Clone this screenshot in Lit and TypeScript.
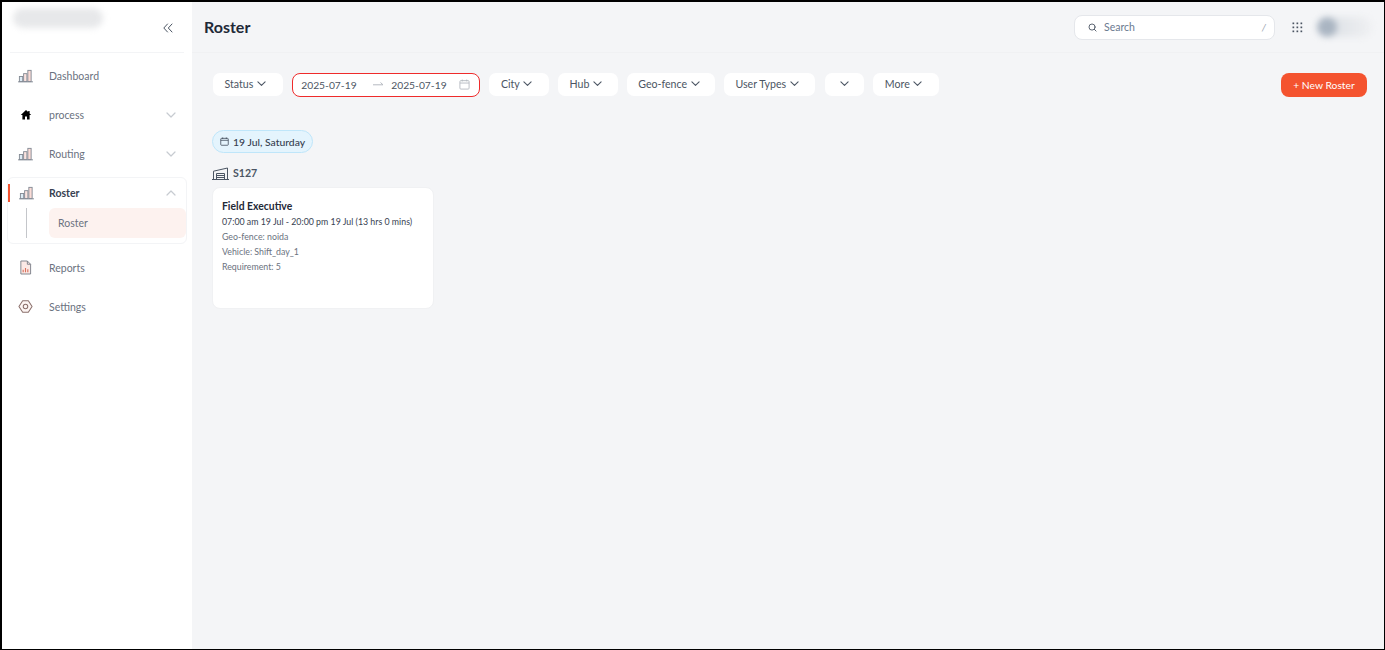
import { LitElement, html, css, svg } from "lit";
import { customElement } from "lit/decorators.js";

const chevron = (cls = "chev") => html`<svg class=${cls} viewBox="0 0 10 6" fill="none" stroke="currentColor" stroke-width="1.2" stroke-linecap="round" stroke-linejoin="round"><path d="M1 1l4 4 4-4"/></svg>`;

const bars = html`<svg class="ico" viewBox="0 0 16 14" fill="none" stroke="#858b95" stroke-width="1">
  <rect x="1.5" y="7.5" width="3.5" height="5.5" fill="#dcebf5"/>
  <rect x="6" y="4.5" width="3.5" height="8.5" fill="#fbe3df"/>
  <rect x="10.5" y="1" width="3.5" height="12" fill="#fbdcd6"/>
  <path d="M0 13.2h16"/></svg>`;

const home = html`<svg class="ico home" viewBox="0 0 12 12"><path fill="#000" d="M6 1 .8 6h1.6v4.6h2.6V7.6h2v3h2.6V6h1.6L9.6 4.4V2H8.2v1.1z"/></svg>`;

const report = html`<svg class="ico rep" viewBox="0 0 14 16" fill="none" stroke="#7b7f88" stroke-width="1">
  <path d="M2 1h7l3.5 3.5V15H2z" fill="#fbe9e5"/><path d="M9 1v3.5h3.5"/>
  <path d="M4.5 13V10.5M7 13V8.5M9.5 13V10" stroke="#d9705c" stroke-width="1.2"/></svg>`;

const gear = html`<svg class="ico gear" viewBox="0 0 16 16" fill="none" stroke="#8a6f6b" stroke-width="1.1">
  <path d="M5 1.8h6l1.4 2.2L15 8l-2.6 4-1.4 2.2H5L3.6 12 1 8l2.6-4z" stroke-linejoin="round" fill="#fdf5f3"/>
  <circle cx="8" cy="8" r="2.4"/></svg>`;

const calendar = (cls: string) => html`<svg class=${cls} viewBox="0 0 12 12" fill="none" stroke="currentColor" stroke-width="1"><rect x="1" y="1.8" width="10" height="9.2" rx="1"/><path d="M1 4.4h10M3.6.6v2M8.4.6v2"/></svg>`;

const warehouse = html`<svg class="wh" viewBox="0 0 17 13" fill="none" stroke="#4b5563" stroke-width="1">
  <path d="M0 12.5h17M1.5 12.5V4.2L15.5 1v11.5"/><path d="M4.5 12.5V6.5h8v6M4.5 8.5h8M4.5 10.5h8"/></svg>`;

interface NavItem { label: string; icon: unknown; arrow?: boolean }

@customElement("app-root")
export class AppRoot extends LitElement {
  static styles = css`
    :host {
      display: block;
      font-family: Lato, "Liberation Sans", sans-serif;
      color: #4b5563;
    }
    .frame {
      box-sizing: border-box;
      height: 650px;
      border: 2px solid #000;
      border-bottom-width: 1px;
      border-right-width: 1px;
      display: flex;
      background: #f4f5f7;
      overflow: hidden;
    }
    .side {
      width: 190px;
      flex: none;
      background: #fff;
      display: flex;
      flex-direction: column;
    }
    .brand {
      height: 51px;
      box-sizing: border-box;
      margin: 0 8px;
      border-bottom: 1px solid #f3f4f6;
      display: flex;
      align-items: center;
      justify-content: space-between;
      padding: 0 4px 0 3px;
    }
    .logo {
      width: 90px;
      height: 20px;
      margin-top: -19px;
      border-radius: 10px;
      background: #e7e8ea;
      filter: blur(3px);
    }
    .collapse {
      width: 24px;
      height: 24px;
      display: flex;
      align-items: center;
      justify-content: center;
      color: #4b5563;
      margin-top: 2px;
    }
    .collapse svg { width: 10px; height: 10px; }
    .nav { padding: 3px 5px 0 5px; display: flex; flex-direction: column; }
    .item {
      height: 39px;
      box-sizing: border-box;
      display: flex;
      align-items: center;
      font-size: 10.5px;
      color: #6b7280;
      position: relative;
    }
    .icon-box { width: 37px; flex: none; display: flex; justify-content: center; box-sizing: border-box; }
    .ico { width: 15px; height: 14px; display: block; }
    .home { width: 12px; height: 12px; }
    .rep { width: 13px; height: 15px; }
    .gear { width: 15px; height: 15px; }
    .label { flex: 1; padding-left: 5px; }
    .chev { width: 9px; height: 5.4px; color: #4b5563; display: block; flex: none; }
    .item .chev { width: 10px; height: 6px; color: #c7cbd1; margin-right: 11px; }
    .group {
      border: 1px solid #f3f4f6;
      border-radius: 6px;
      height: 67px;
      box-sizing: border-box;
      margin-top: 4px;
      margin-bottom: 4px;
      display: flex;
      flex-direction: column;
    }
    .group .icon-box { width: 36px; }
    .group .label { padding-left: 5px; }
    .group .item { height: 30px; padding-bottom: 1px; flex: none; font-weight: 700; color: #374151; }
    .group .item .chev { margin-right: 10px; transform: rotate(180deg); }
    .marker {
      position: absolute;
      left: 0;
      top: 6px;
      width: 2px;
      height: 18px;
      background: #f4532f;
    }
    .sub { display: flex; height: 30px; }
    .line { width: 1px; margin-left: 18px; background: #c4c6ca; }
    .subitem {
      margin-left: 22px;
      flex: 1;
      background: #fdf2ef;
      border-radius: 6px;
      font-size: 10.5px;
      color: #6b7280;
      display: flex;
      align-items: center;
      padding-left: 9px;
    }
    .main { flex: 1; min-width: 0; display: flex; flex-direction: column; }
    .top {
      height: 51px;
      box-sizing: border-box;
      flex: none;
      display: flex;
      align-items: center;
      border-bottom: 1px solid #f0f1f3;
      padding: 0 12px 0 12px;
    }
    h1 {
      margin: -1px 0 0;
      font-size: 16px;
      font-weight: 700;
      color: #1f2937;
      flex: 1;
    }
    .search {
      width: 201px;
      height: 25px;
      box-sizing: border-box;
      background: #fff;
      border: 1px solid #e5e7eb;
      border-radius: 8px;
      display: flex;
      align-items: center;
      padding: 0 8px 0 13px;
      font-size: 10.5px;
      color: #6b7a90;
      gap: 7px;
    }
    .search svg { width: 9px; height: 9px; color: #4b5563; }
    .search span { flex: 1; }
    .search i { color: #9ca3af; font-size: 10px; }
    .apps { width: 11px; height: 11px; margin-left: 17px; color: #4b5563; display: block; }
    .avatar {
      width: 55px;
      height: 20px;
      margin-left: 14px;
      display: flex;
      align-items: center;
      filter: blur(3px);
      background: linear-gradient(to right, #d8dde3, #eff0f2);
      border-radius: 10px;
    }
    .avatar b { display: block; width: 20px; height: 20px; border-radius: 50%; background: #aab5c2; }
    .filters {
      display: flex;
      align-items: flex-start;
      padding: 20px 17px 0 21px;
      gap: 9.2px;
      height: 24px;
      flex: none;
    }
    .fbtn {
      height: 23px;
      box-sizing: border-box;
      background: #fff;
      border-radius: 7px;
      display: flex;
      align-items: center;
      justify-content: flex-start;
      padding: 0 0 1px 11.5px;
      gap: 3.5px;
      font-size: 10.6px;
      color: #4b5563;
    }
    .fbtn.blank { justify-content: center; padding-left: 0; }
    .date {
      width: 188px;
      height: 24px;
      border: 1px solid #ef2b2b;
      border-radius: 8px;
      background: #fff;
      box-sizing: border-box;
      display: flex;
      align-items: center;
      padding: 0 9px 1px 8px;
      font-size: 10.3px;
      color: #4b5563;
    }
    .date .d1 { width: 72px; }
    .date .arrow { width: 18px; color: #b6bac1; display: flex; }
    .date .arrow svg { width: 11px; height: 7px; }
    .date .d2 { flex: 1; }
    .date .cal { width: 11px; height: 11px; color: #b6bac1; }
    .new {
      margin-left: auto;
      height: 24px;
      width: 86px;
      border: 0;
      border-radius: 8px;
      background: #f4532f;
      color: #fff;
      font: 400 10.3px Lato, "Liberation Sans", sans-serif;
      padding: 0;
    }
    .content { padding: 33px 0 0 20px; display: flex; flex-direction: column; align-items: flex-start; }
    .chip {
      height: 23px;
      width: 101px;
      box-sizing: border-box;
      background: #e4f4fd;
      border: 1px solid #bfe6fa;
      border-radius: 12px;
      display: flex;
      align-items: center;
      padding-left: 7px;
      gap: 4px;
      font-size: 10.4px;
      font-weight: 500;
      color: #374151;
      white-space: nowrap;
    }
    .chip svg { width: 9px; height: 9px; color: #374151; }
    .hub {
      display: flex;
      align-items: center;
      gap: 4px;
      margin: 13px 0 7px 0;
      height: 14px;
      font-size: 10.6px;
      font-weight: 700;
      color: #4b5563;
    }
    .wh { width: 17px; height: 13px; }
    .card {
      width: 222px;
      height: 122px;
      box-sizing: border-box;
      background: #fff;
      border-radius: 8px;
      border: 1px solid #f0f1f3;
      padding: 11px 9px;
      display: flex;
      flex-direction: column;
    }
    .card h3 { margin: 0; font-size: 10.4px; font-weight: 700; color: #1f2937; line-height: 14px; }
    .card .time { font-size: 8.8px; color: #374151; line-height: 15px; margin: 1px 0 0; white-space: nowrap; }
    .card .meta { font-size: 8.8px; color: #6b7280; line-height: 15px; position: relative; top: -0.4px; }
  `;

  private nav(n: NavItem) {
    return html`<div class="item">
      <div class="icon-box">${n.icon}</div>
      <div class="label">${n.label}</div>
      ${n.arrow ? chevron() : ""}
    </div>`;
  }

  private filter(label: string, width: number) {
    return html`<div class="fbtn ${label ? "" : "blank"}" style="width:${width}px">${label ? html`<span>${label}</span>` : ""}${chevron()}</div>`;
  }

  render() {
    return html`<div class="frame">
      <aside class="side">
        <div class="brand">
          <div class="logo"></div>
          <div class="collapse">
            <svg viewBox="0 0 10 10" fill="none" stroke="currentColor" stroke-width="1" stroke-linecap="round" stroke-linejoin="round"><path d="M4.5 1 .8 5l3.7 4M9 1 5.3 5 9 9"/></svg>
          </div>
        </div>
        <nav class="nav">
          ${this.nav({ label: "Dashboard", icon: bars })}
          ${this.nav({ label: "process", icon: home, arrow: true })}
          ${this.nav({ label: "Routing", icon: bars, arrow: true })}
          <div class="group">
            <div class="item">
              <span class="marker"></span>
              <div class="icon-box">${bars}</div>
              <div class="label">Roster</div>
              ${chevron()}
            </div>
            <div class="sub"><div class="line"></div><div class="subitem">Roster</div></div>
          </div>
          ${this.nav({ label: "Reports", icon: report })}
          ${this.nav({ label: "Settings", icon: gear })}
        </nav>
      </aside>
      <main class="main">
        <header class="top">
          <h1>Roster</h1>
          <div class="search">
            <svg viewBox="0 0 10 10" fill="none" stroke="currentColor" stroke-width="1" stroke-linecap="round"><circle cx="4.5" cy="4.5" r="3.4"/><path d="M7 7l2 2"/></svg>
            <span>Search</span><i>/</i>
          </div>
          <svg class="apps" viewBox="0 0 11 11" fill="currentColor">
            ${[0.5, 4.5, 8.5].flatMap((y) => [0.5, 4.5, 8.5].map((x) => svg`<rect x=${x} y=${y} width="1.7" height="1.7"/>`))}
          </svg>
          <div class="avatar"><b></b></div>
        </header>
        <div class="filters">
          ${this.filter("Status", 70)}
          <div class="date">
            <span class="d1">2025-07-19</span>
            <span class="arrow"><svg viewBox="0 0 11 7" fill="none" stroke="currentColor" stroke-width="1"><path d="M0 3.8h10M7.5 1.5 10 3.8"/></svg></span>
            <span class="d2">2025-07-19</span>
            ${calendar("cal")}
          </div>
          ${this.filter("City", 59.5)}
          ${this.filter("Hub", 59.5)}
          ${this.filter("Geo-fence", 88)}
          ${this.filter("User Types", 91.5)}
          ${this.filter("", 39.5)}
          ${this.filter("More", 66)}
          <button class="new">+ New Roster</button>
        </div>
        <section class="content">
          <div class="chip">${calendar("")}<span>19 Jul, Saturday</span></div>
          <div class="hub">${warehouse}<span>S127</span></div>
          <article class="card">
            <h3>Field Executive</h3>
            <div class="time">07:00 am 19 Jul - 20:00 pm 19 Jul (13 hrs 0 mins)</div>
            <div class="meta">Geo-fence: noida</div>
            <div class="meta">Vehicle: Shift_day_1</div>
            <div class="meta">Requirement: 5</div>
          </article>
        </section>
      </main>
    </div>`;
  }
}
